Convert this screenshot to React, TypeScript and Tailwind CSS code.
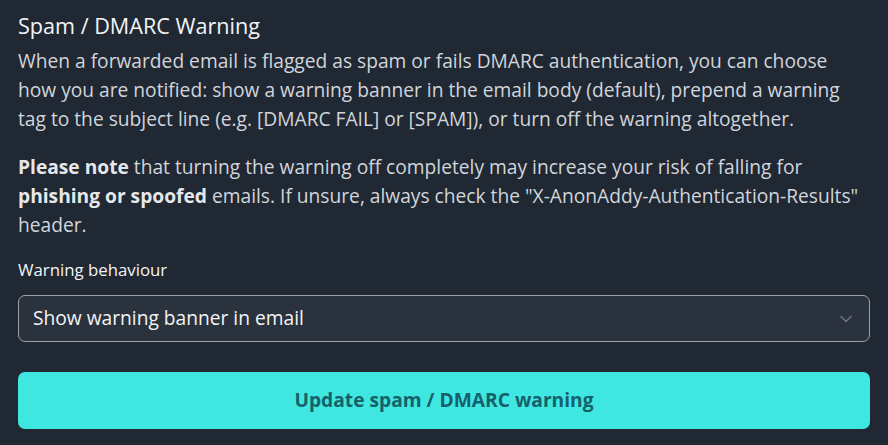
import { FiChevronDown } from "react-icons/fi";

const App = () => {
  return (
    <div
      className="min-h-screen w-full bg-[#202833] px-[18px] pt-[9px] text-[#d1d5db]"
      style={{ fontFamily: '"Open Sans", sans-serif' }}
    >
      <h3 className="text-[21.6px] leading-[33.6px] text-[#f3f4f6]">Spam / DMARC Warning</h3>
      <p className="mt-[4.8px] text-[19.2px] leading-[28.8px]">
        When a forwarded email is flagged as spam or fails DMARC authentication, you can choose
        how you are notified: show a warning banner in the email body (default), prepend a warning
        tag to the subject line (e.g. [DMARC FAIL] or [SPAM]), or turn off the warning altogether.
      </p>
      <p className="mt-[19.2px] text-[19.2px] leading-[28.8px]">
        <b className="font-bold text-[#e5e7eb]">Please note</b> that turning the warning off
        completely may increase your risk of falling for{" "}
        <b className="font-bold text-[#e5e7eb]">phishing or spoofed</b> emails. If unsure, always
        check the "X-AnonAddy-Authentication-Results" header.
      </p>
      <div className="mt-[19px]">
        <label className="block text-[16.8px] leading-[24px] text-[#f3f4f6]">
          Warning behaviour
        </label>
        <div className="relative mt-[13px]">
          <div className="flex h-[47px] items-center rounded-[7px] border border-[#9aa1ab] bg-[#2a323d] px-[14px] text-[19.2px] text-[#f3f4f6]">
            Show warning banner in email
          </div>
          <FiChevronDown className="pointer-events-none absolute right-[14px] top-1/2 h-5 w-5 -translate-y-1/2 text-[#6b7280]" />
        </div>
      </div>
      <button className="mt-[30px] flex h-[57px] w-full items-center justify-center rounded-[7px] bg-[#3ee8e0] text-[19.2px] font-bold text-[#17606b]">
        Update spam / DMARC warning
      </button>
    </div>
  );
};

export default App;
